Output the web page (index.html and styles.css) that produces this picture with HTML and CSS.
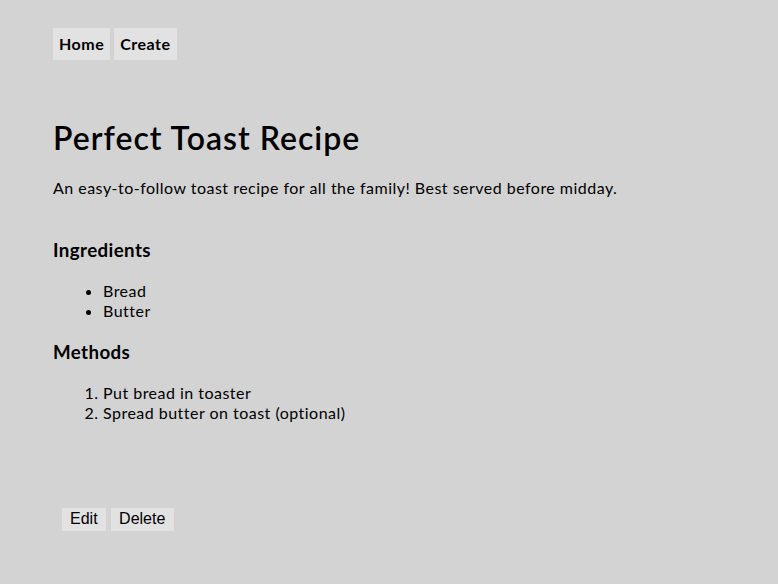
FILE: index.html
```html
<!DOCTYPE html>
<html>
<head>
<meta charset="utf-8">
<link rel="stylesheet" href="styles.css">
</head>
<body>
<div class="page">
  <nav class="nav">
    <a class="nav-link" href="#">Home</a>
    <a class="nav-link" href="#">Create</a>
  </nav>
  <main class="recipe">
    <h1 class="title">Perfect Toast Recipe</h1>
    <p class="desc">An easy-to-follow toast recipe for all the family! Best served before midday.</p>
    <h3 class="section">Ingredients</h3>
    <ul class="list">
      <li>Bread</li>
      <li>Butter</li>
    </ul>
    <h3 class="section">Methods</h3>
    <ol class="list">
      <li>Put bread in toaster</li>
      <li>Spread butter on toast (optional)</li>
    </ol>
    <div class="actions">
      <button class="btn">Edit</button>
      <button class="btn">Delete</button>
    </div>
  </main>
</div>
</body>
</html>
```
FILE: styles.css
```css
html, body {
  margin: 0;
  padding: 0;
  background: #d3d3d3;
}
body {
  font-family: "Lato", "Noto Sans", sans-serif;
  color: #000;
}
.page {
  padding: 28px 53px 0;
}
.nav {
  display: flex;
  gap: 4px;
}
.nav-link {
  display: block;
  background: #e2e2e2;
  color: #000;
  text-decoration: none;
  font-weight: 700;
  font-size: 16px;
  line-height: 20px;
  letter-spacing: 0.5px;
  padding: 6px 6px;
}
.recipe {
  padding-top: 58px;
}
.title {
  font-size: 32px;
  font-weight: 600;
  letter-spacing: 1px;
  margin: 0 0 20px;
  line-height: 40px;
}
.desc {
  font-size: 16px;
  letter-spacing: 0.48px;
  margin: 0 0 41px;
  line-height: 20px;
}
.section {
  font-size: 18.72px;
  font-weight: 700;
  letter-spacing: 0.4px;
  margin: 0 0 20px;
  line-height: 22px;
}
.list {
  margin: 0 0 20px;
  padding-left: 50px;
  font-size: 16px;
  letter-spacing: 0.48px;
  line-height: 20px;
}
.actions {
  margin-top: 85px;
  padding-left: 9px;
  display: flex;
  gap: 5px;
}
.btn {
  font-family: "Liberation Sans", Arial, sans-serif;
  font-size: 16px;
  line-height: 18px;
  background: #e2e2e2;
  color: #000;
  border: none;
  padding: 2px 8.5px 3px 8px;
  height: 23px;
  margin: 0;
}
```
